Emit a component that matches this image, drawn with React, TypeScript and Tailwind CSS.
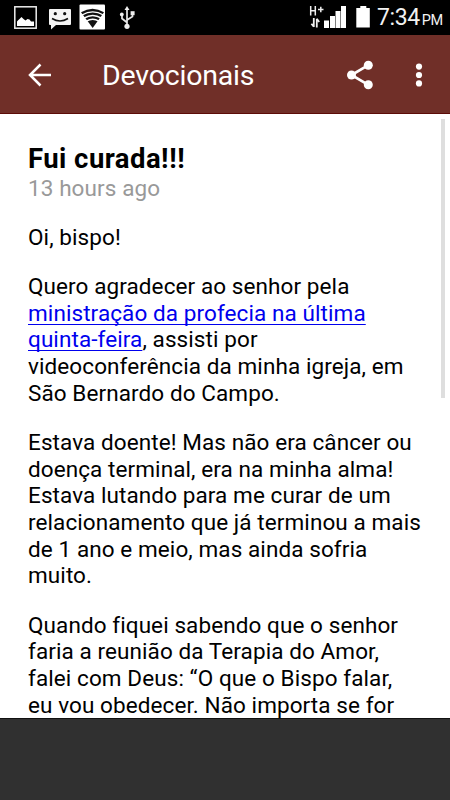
function StatusBar() {
  return (
    <div className="flex h-[35px] shrink-0 items-start justify-between bg-black text-[#f2f2f2]">
      <svg width="140" height="35" viewBox="0 0 140 35" fill="none">
        <rect x="14.8" y="6.8" width="21.4" height="21.4" stroke="#eee" strokeWidth="1.5" />
        <path d="M17 26v-4.5q1-1.5 2.5-2.5l2-2 2 2 2 1.5 2-1.5 2 .5 1.5 2H34V26z" fill="#fff" />
        <path d="M50 9h20q1 0 1 1v14q0 1-1 1H56l-5 4.5V25h-1q-1 0-1-1V10q0-1 1-1z" fill="#f4f4f4" />
        <circle cx="55.3" cy="13.7" r="1.6" fill="#111" />
        <circle cx="64.7" cy="13.7" r="1.6" fill="#111" />
        <path d="M52 18.5q8 5 16 0" stroke="#111" strokeWidth="1.5" />
        <rect x="79.5" y="4.5" width="25.5" height="25" rx="1" fill="#fff" />
        <path d="M81 12.2q11.5-7 23 0L92.7 28z" fill="#111" />
        <path d="M82 15q10.7-6.2 21.4 0M84 18.2q8.7-5.4 17.4 0M86.5 21.2q6.2-4 12.4 0" stroke="#fff" strokeWidth="1.4" />
        <path d="M127 25V9M127 22.5l-5-4V15M127 20l5.5-3.5V13" stroke="#e8e8e8" strokeWidth="1.7" />
        <path d="M127 6l2.5 4h-5z" fill="#eee" />
        <circle cx="127" cy="26.3" r="2.6" fill="#eee" />
        <circle cx="121.8" cy="14.4" r="1.9" fill="#eee" />
        <rect x="130.6" y="11.2" width="4" height="4" fill="#eee" />
      </svg>
      <div className="flex">
        <svg width="76" height="35" viewBox="300 0 76 35" fill="none">
          <path d="M310.7 6v9.5M315.3 6v9.5M310.7 10.8h4.6M318 9.5h5.5M320.8 6.8v5.4" stroke="#eee" strokeWidth="1.5" />
          <path d="M313.8 18v9M311.4 23.7l2.4 3M316.8 27.5v-8.8M316.8 18.7l2.4 3.3" stroke="#eee" strokeWidth="1.8" />
          <path d="M324 20.5h5V28h-5zM330 16h5v12h-5zM335.5 11h5v17h-5zM341 6h5v22h-5z" fill="#fff" />
          <path d="M356.3 8h4V6h6v2h3.5v19.5h-13.5z" fill="#fff" />
        </svg>
        <div className="w-[74px] pt-[5px] pl-px whitespace-nowrap">
          <span className="text-[23px] leading-[26px] tracking-[-0.4px]">7:34</span>
          <span className="ml-[2px] text-[14.5px] tracking-[-0.5px]">PM</span>
        </div>
      </div>
    </div>
  );
}

function AppBar() {
  return (
    <header className="flex h-[79px] shrink-0 items-center border-b border-[#5c0c08] bg-[#702f28] text-white">
      <svg width="102" height="78" viewBox="0 0 102 78" fill="none" stroke="#fff" strokeWidth="2.5">
        <path d="M51 40H30M40.5 29.5L30 40l10.5 10.5" />
      </svg>
      <h1 className="flex-1 pt-[3px] text-[28.5px] leading-[34px] font-normal tracking-[-0.2px] whitespace-nowrap">Devocionais</h1>
      <svg width="130" height="78" viewBox="320 0 130 78" fill="#fff">
        <path d="M368.3 30.2L351.5 40l16.8 9.8" fill="none" stroke="#fff" strokeWidth="2.7" />
        <circle cx="368.3" cy="30.2" r="4.5" />
        <circle cx="351.5" cy="40" r="4.5" />
        <circle cx="368.3" cy="49.8" r="4.5" />
        <circle cx="419" cy="31.6" r="3.1" />
        <circle cx="419" cy="40" r="3.1" />
        <circle cx="419" cy="48.4" r="3.1" />
      </svg>
    </header>
  );
}

export default function App() {
  return (
    <div className="flex h-[800px] w-[450px] flex-col overflow-hidden bg-[#303030] font-['Roboto',sans-serif]">
      <StatusBar />
      <AppBar />
      <main className="flex h-[604px] shrink-0 justify-between overflow-hidden bg-white text-black">
        <article className="pt-[29px] pl-7 text-[22.5px] leading-[26.7px] tracking-[0.09px] whitespace-nowrap [font-variant-ligatures:none]">
          <h2 className="text-[27.5px] leading-[32px] font-bold tracking-[0.45px]">
            Fui curada<span className="tracking-[0.6px]">!!!</span>
          </h2>
          <p className="text-[#999]">13 hours ago</p>
          <div className="mt-[22px] flex flex-col gap-[22.5px]">
            <p>Oi, bispo!</p>
            <p>
              Quero agradecer ao senhor pela<br />
              <a className="text-[#0000ee] underline decoration-1 underline-offset-[3px] [text-decoration-skip-ink:none]">
                ministração da profecia na última<br />quinta-feira
              </a>
              , assisti por<br />
              videoconferência da minha igreja, em<br />
              São Bernardo do Campo.
            </p>
            <p>
              Estava doente! Mas não era câncer ou<br />
              doença terminal, era na minha alma!<br />
              Estava lutando para me curar de um<br />
              relacionamento que já terminou a mais<br />
              de 1 ano e meio, mas ainda sofria<br />
              muito.
            </p>
            <p>
              Quando fiquei sabendo que o senhor<br />
              faria a reunião da Terapia do Amor,<br />
              falei com Deus: “O que o Bispo falar,<br />
              eu vou obedecer. Não importa se for
            </p>
          </div>
        </article>
        <div className="mt-[5px] mr-[5px] h-[279px] w-1 bg-[#dedede]" />
      </main>
      <div className="h-px shrink-0 bg-[#111]" />
    </div>
  );
}
